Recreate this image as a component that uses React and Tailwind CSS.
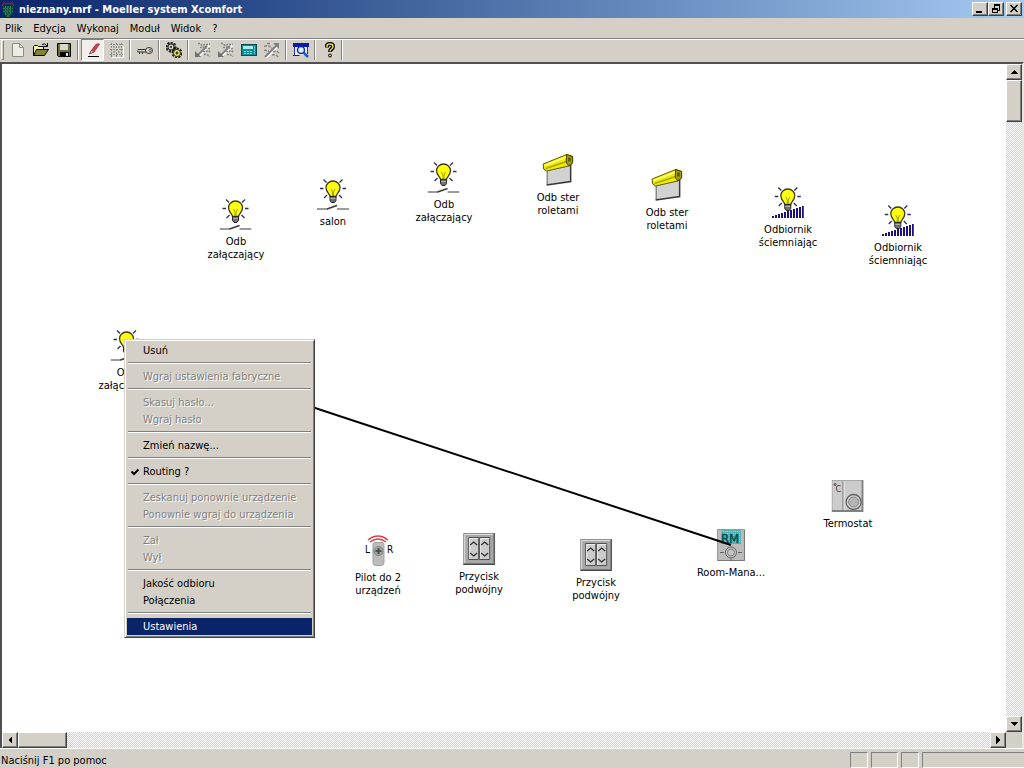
import { useState } from "react";

const raised =
  "bg-[#d4d0c8] border border-t-white border-l-white border-r-[#404040] border-b-[#404040] shadow-[inset_-1px_-1px_0_#808080]";
const track =
  "bg-[repeating-conic-gradient(#d4d0c8_0_25%,#ffffff_0_50%)] [background-size:2px_2px]";

const menus = ["Plik", "Edycja", "Wykonaj", "Moduł", "Widok", "?"];

const contextMenu = [
  [{ label: "Usuń" }],
  [{ label: "Wgraj ustawienia fabryczne", disabled: true }],
  [
    { label: "Skasuj hasło...", disabled: true },
    { label: "Wgraj hasło", disabled: true },
  ],
  [{ label: "Zmień nazwę..." }],
  [{ label: "Routing ?", checked: true }],
  [
    { label: "Zeskanuj ponownie urządzenie", disabled: true },
    { label: "Ponownie wgraj do urządzenia", disabled: true },
  ],
  [
    { label: "Zał", disabled: true },
    { label: "Wył", disabled: true },
  ],
  [{ label: "Jakość odbioru" }, { label: "Połączenia" }],
  [{ label: "Ustawienia" }],
];

// x is the centre of the module, y the top of its icon
const modules = [
  { id: 1, x: 234, y: 134, icon: SwitchIcon, lines: ["Odb", "załączający"] },
  { id: 2, x: 331, y: 114, icon: SwitchIcon, lines: ["salon"] },
  { id: 3, x: 442, y: 97, icon: SwitchIcon, lines: ["Odb", "załączający"] },
  { id: 4, x: 556, y: 90, icon: ShutterIcon, lines: ["Odb ster", "roletami"] },
  { id: 5, x: 665, y: 105, icon: ShutterIcon, lines: ["Odb ster", "roletami"] },
  { id: 6, x: 786, y: 122, icon: DimmerIcon, lines: ["Odbiornik", "ściemniając"] },
  { id: 7, x: 896, y: 140, icon: DimmerIcon, lines: ["Odbiornik", "ściemniając"] },
  { id: 8, x: 125, y: 265, icon: SwitchIcon, lines: ["Odb", "załączający"] },
  { id: 9, x: 376, y: 470, icon: RemoteIcon, lines: ["Pilot do 2", "urządzeń"] },
  { id: 10, x: 477, y: 469, icon: ButtonIcon, lines: ["Przycisk", "podwójny"] },
  { id: 11, x: 594, y: 475, icon: ButtonIcon, lines: ["Przycisk", "podwójny"] },
  { id: 12, x: 729, y: 465, icon: RoomManagerIcon, lines: ["Room-Mana..."] },
  { id: 13, x: 846, y: 416, icon: ThermostatIcon, lines: ["Termostat"] },
];

function Bulb() {
  return (
    <g>
      <path
        d="M6.500 1.500l3 3M25.500 1.500l-3 3M3 10.500h3.500M25.500 10.500H29M7 20l3-3M25 20l-3-3"
        stroke="#30305a"
        strokeWidth="1.300"
      />
      <path
        d="M13 18.500c0-2.500-4-4-4-9a7 6.500 0 0 1 14 0c0 5-4 6.500-4 9z"
        fill="#ffff10"
        stroke="#3c3c10"
        strokeWidth="1.300"
      />
      <path d="M14 11l1.500 3v4M18 11l-1.500 3v4" stroke="#a0a000" fill="none" />
      <path
        d="M13 18.500h6v4l-1.500 2h-3l-1.500-2z"
        fill="#707070"
        stroke="#282828"
      />
      <path d="M13.500 20.500h5" stroke="#b0b0b0" />
    </g>
  );
}

function SwitchIcon() {
  return (
    <svg width="32" height="32" viewBox="0 0 32 32" fill="none">
      <Bulb />
      <path d="M0 31h10.500M20 31h12" stroke="#383838" />
      <path d="M10 31l10-3.500" stroke="#383838" strokeWidth="1.500" />
    </svg>
  );
}

function DimmerIcon() {
  return (
    <svg width="32" height="32" viewBox="0 0 32 32" fill="none">
      <Bulb />
      {[0, 1, 2, 3, 4, 5, 6, 7, 8, 9, 10].map((i) => (
        <rect
          key={i}
          x={i * 3}
          y={30 - i}
          width="2"
          height={2 + i}
          fill="#1c1080"
          shapeRendering="crispEdges"
        />
      ))}
    </svg>
  );
}

function ShutterIcon() {
  return (
    <svg width="32" height="32" viewBox="0 0 32 32" fill="none">
      <path d="M5.500 15L28.500 9v18L5.500 31z" fill="#d2d2d2" />
      <path d="M5.500 15v16" stroke="#606060" />
      <path d="M5 31l24-3.500V9" stroke="#383838" strokeWidth="1.500" />
      <path d="M1.500 10L25 .500l6 2V9l-4 3L5 17l-3-2z" fill="#f0ec00" stroke="#5c5c00" />
      <path d="M3 11.500L25 3" stroke="#ffff80" strokeWidth="1.500" />
      <path d="M4 14.500L25 7.500" stroke="#a8a400" strokeWidth="1.500" />
      <path d="M25 .500l6 2V9l-4 3-2.500-4z" fill="#a4a000" stroke="#404000" />
      <path d="M26.500 3.500h2.500v4h-2.500z" fill="#585800" />
    </svg>
  );
}

function RemoteIcon() {
  return (
    <svg width="36" height="32" viewBox="0 0 36 32" fill="none">
      <path d="M8 6q10-8 20 0M10 8q8-6 16 0" stroke="#d84040" strokeWidth="1.500" />
      <path d="M13 10.500q0-2 2-2h7q2 0 2 2v18q0 3-3 3h-5q-3 0-3-3z" fill="#bcbcbc" stroke="#a0a0a0" />
      <circle cx="18.500" cy="17" r="4.500" fill="#a4a4a4" stroke="#808080" />
      <path d="M18.500 14v6M15.500 17h6" stroke="#505050" strokeWidth="2" />
      <text x="5" y="19" fontSize="10" fill="#000000">L</text>
      <text x="27" y="19" fontSize="10" fill="#000000">R</text>
    </svg>
  );
}

function ButtonIcon() {
  return (
    <svg width="32" height="32" viewBox="0 0 32 32" fill="none">
      <path d="M0 0h32v32H0z" fill="#a8a8a8" />
      <path d="M.5 31V.5H31" stroke="#909090" />
      <path d="M1.500 30V1.500H30" stroke="#dcdcdc" />
      <path d="M0 31.500h31.500V0" stroke="#484848" />
      <path d="M1 30.500h29.500V1" stroke="#787878" />
      <path d="M5.500 4.500h10v22h-10zM16.500 4.500h10v22h-10z" fill="#cccccc" stroke="#505050" />
      <path d="M6.500 26V5.500H15M17.500 26V5.500H26" stroke="#ececec" />
      <path
        d="M7 12l3.500-3 3.500 3M7 20l3.500 3 3.500-3M18 12l3.500-3 3.500 3M18 20l3.500 3 3.500-3"
        stroke="#303030"
        strokeWidth="1.300"
      />
    </svg>
  );
}

function RoomManagerIcon() {
  return (
    <svg width="32" height="32" viewBox="0 0 32 32" fill="none">
      <rect x="2.500" y=".5" width="27" height="31" fill="#bcbcbc" stroke="#989898" />
      <path d="M29.500 1v30.500H3" stroke="#787878" />
      <rect x="6" y="1" width="20" height="14" fill="#58b4b0" />
      <path d="M6 2.500h20M6 4.500h20M6 6.500h20M6 8.500h20M6 10.500h20M6 12.500h20" stroke="#98d0cc" strokeDasharray="1 1" />
      <text x="6" y="14" fontSize="13" fill="#004c58" stroke="#004c58" strokeWidth=".5">RM</text>
      <circle cx="16" cy="23.500" r="5.500" fill="#c4c4c4" stroke="#606060" />
      <circle cx="16" cy="23.500" r="3.500" stroke="#808080" />
      <path d="M5 23.500h4M23 23.500h4M16 30v2" stroke="#606060" />
    </svg>
  );
}

function ThermostatIcon() {
  return (
    <svg width="32" height="32" viewBox="0 0 32 32" fill="none">
      <path d="M0 0h32v32H0z" fill="#cccccc" />
      <path d="M.5 31V.5H31" stroke="#a8a8a8" />
      <path d="M0 31h32M31 0v32" stroke="#808080" strokeWidth="2" />
      <path d="M11.500 1v29" stroke="#686868" />
      <path d="M12.500 1v29" stroke="#eeeeee" />
      <text x="4" y="12" fontSize="9" fill="#404040">C</text>
      <circle cx="3.500" cy="4.500" r="1" stroke="#404040" />
      <circle cx="22" cy="22" r="7.500" fill="#d4d4d4" stroke="#606060" strokeWidth="1.300" />
      <circle cx="22" cy="22" r="5" fill="#b4b4b4" stroke="#848484" />
    </svg>
  );
}

function Svg16({ children }) {
  return (
    <svg width="16" height="16" viewBox="0 0 16 16" fill="none" aria-hidden="true">
      {children}
    </svg>
  );
}

function TransferGlyph() {
  return (
    <Svg16>
      <path d="M3 15L15 3" stroke="#ffffff" strokeWidth="2" />
      <path d="M2 14L12 4" stroke="#808080" strokeWidth="2" />
      <path d="M0 15V9l6 6z" fill="#707070" />
      <path
        d="M3 1.500h2l2 2 3-1h5M5 5.500h3l2-1 2 2h4M8 9.500h3l2-1 3 2M9 12.500h3l3 2"
        stroke="#848484"
        strokeDasharray="2 1"
        strokeWidth="1.500"
      />
    </Svg16>
  );
}

const tools = [
  [
    {
      label: "Nowy",
      icon: (
        <Svg16>
          <path d="M2.500 1.500h7l4 4v9h-11z" fill="#eeece6" stroke="#8c8c84" />
          <path d="M9.500 1.500v4h4" stroke="#8c8c84" />
        </Svg16>
      ),
    },
    {
      label: "Otwórz",
      icon: (
        <Svg16>
          <path d="M.5 13.500v-9l1-1h3l1 1h5v3" fill="#f4f4a0" stroke="#000000" />
          <path d="M.5 13.500l3-6h12l-4 6z" fill="#84842c" stroke="#000000" />
          <path d="M9 2.500q3-2 5 1.500M14.500 1v3.500H11" stroke="#000000" />
        </Svg16>
      ),
    },
    {
      label: "Zapisz",
      icon: (
        <Svg16>
          <path d="M1.500 1.500h13v13h-12l-1-1z" fill="#70702c" stroke="#000000" />
          <path d="M4 2h8v6H4z" fill="#d8d8d0" />
          <path d="M4 10h9v5H4z" fill="#000000" />
          <path d="M10 11h2v3h-2z" fill="#e4e4e4" />
        </Svg16>
      ),
    },
  ],
  [
    {
      label: "Edycja",
      pressed: true,
      icon: (
        <Svg16>
          <path d="M6 9l5.500-7h3L9 10z" fill="#cc4458" stroke="#a83040" />
          <path d="M6 9l-1.500 3L9 10" fill="#f4d8cc" stroke="#8c4040" />
          <path d="M3 14.500h11" stroke="#000000" />
        </Svg16>
      ),
    },
    {
      label: "Siatka",
      icon: (
        <Svg16>
          <path d="M2 2.500h13M2 7.500h13M2 12.500h13M3.500 1v14M8.500 1v14M13.500 1v14" stroke="#8c8c8c" strokeDasharray="2 1" />
          <path d="M5 4h2v2H5zM10 4h2v2h-2zM5 9h2v2H5zM10 9h2v2h-2z" fill="#a8a8a4" />
          <path d="M4 15.500h12M15.500 4v12" stroke="#ffffff" />
        </Svg16>
      ),
    },
  ],
  [
    {
      label: "Hasło",
      icon: (
        <Svg16>
          <path d="M9 7.500H1l-1 1 1 1.500h8M2.500 10v2M5.500 10v2" stroke="#303030" />
          <ellipse cx="12" cy="8.500" rx="3.500" ry="3" fill="#dcdcd0" stroke="#303030" />
          <circle cx="13" cy="8.500" r="1" fill="#ffffff" stroke="#505050" />
        </Svg16>
      ),
    },
  ],
  [
    {
      label: "Opcje",
      icon: (
        <Svg16>
          <circle cx="5" cy="5" r="4" stroke="#202020" strokeWidth="3" strokeDasharray="2 1" />
          <circle cx="5" cy="5" r="3" fill="#d0d0bc" stroke="#303030" />
          <circle cx="5" cy="5" r="1" fill="#202020" />
          <circle cx="11" cy="11" r="4" stroke="#202010" strokeWidth="3" strokeDasharray="2 1" />
          <circle cx="11" cy="11" r="3.500" fill="#e8e488" stroke="#404010" />
          <circle cx="11" cy="11" r="1.500" fill="#404010" />
        </Svg16>
      ),
    },
  ],
  [
    { label: "Wgraj", disabled: true, icon: <TransferGlyph /> },
    { label: "Odczytaj", disabled: true, icon: <TransferGlyph /> },
    {
      label: "Urządzenie",
      icon: (
        <Svg16>
          <rect x=".5" y="2.500" width="15" height="11" fill="#128c94" stroke="#084850" />
          <path d="M2 4h10v3H2z" fill="#a8ecec" />
          <path d="M3 9.500h8M3 11.500h8" stroke="#88dce0" strokeDasharray="2 1" />
          <path d="M13 4h1v8h-1z" fill="#50c0c4" />
        </Svg16>
      ),
    },
    {
      label: "Sygnał",
      disabled: true,
      icon: (
        <Svg16>
          <path d="M2 16L15 3" stroke="#ffffff" strokeWidth="2" />
          <path d="M1 15L14 2" stroke="#808080" strokeWidth="2" />
          <path d="M9 1h6v6z" fill="#808080" />
          <path d="M0 4.500q5-2 8 2M0 8.500q4-1 5 2M9 10q3-2 6 1M8 13q4-1 6 2M3 1.500h4" stroke="#858585" strokeWidth="1.500" strokeDasharray="3 1" />
        </Svg16>
      ),
    },
  ],
  [
    {
      label: "Podgląd",
      icon: (
        <Svg16>
          <path d="M0 1h16v4H0z" fill="#0818b0" />
          <path d="M1.500 5v8H7M14.500 5v7" stroke="#2030b0" />
          <path d="M2 5h12v8H2z" fill="#f2f2f2" />
          <circle cx="8" cy="8" r="3.500" fill="#d8f0ff" stroke="#1c2c94" strokeWidth="1.500" />
          <path d="M10.500 10.500L15 15" stroke="#2058c8" strokeWidth="2.500" />
          <path d="M0 13.500h6" stroke="#0818b0" />
        </Svg16>
      ),
    },
  ],
  [
    {
      label: "Pomoc",
      icon: (
        <Svg16>
          <path d="M5 5.500V4q0-2 3-2t3 2.500q0 1.500-1.500 2.500T8 10" stroke="#000000" strokeWidth="4" />
          <path d="M5 5V4q0-2 3-2t3 2.500q0 1.500-1.500 2.500T8 9.500" stroke="#e8e050" strokeWidth="1.500" />
          <circle cx="8" cy="13.500" r="1.500" fill="#e8e050" stroke="#000000" />
        </Svg16>
      ),
    },
  ],
];

function AppIcon() {
  return (
    <svg width="16" height="16" viewBox="0 0 16 16" fill="none" aria-hidden="true">
      <path d="M3 5h10v6l-3 5H6l-3-5z" fill="#0c5030" />
      <path d="M3 7.500h10M3 10.500h10M5 13.500h6M5.500 5v9M8 5v11M10.500 5v9" stroke="#2c7c5c" strokeDasharray="2 1" />
      <path d="M2.500 5q0-4 3-4M13.500 5q0-4-3-4M5 4q0-2 3-2t3 2" stroke="#84304c" />
    </svg>
  );
}

function WindowButton({ label, children }) {
  return (
    <button aria-label={label} className={`flex h-[14px] w-4 items-center justify-center ${raised}`}>
      <svg width="12" height="10" viewBox="0 0 12 10" fill="none" stroke="#000000" shapeRendering="crispEdges">
        {children}
      </svg>
    </button>
  );
}

function TitleBar() {
  return (
    <header className="flex h-[18px] shrink-0 items-center bg-linear-to-r from-[#0a246a] to-[#a6caf0] pr-[2px]">
      <AppIcon />
      <h1 className="ml-[3px] flex-1 truncate pt-px text-[11px] leading-4 font-bold text-white">
        nieznany.mrf - Moeller system Xcomfort
      </h1>
      <WindowButton label="Minimalizuj">
        <path d="M2 8h6" strokeWidth="2" />
      </WindowButton>
      <WindowButton label="Przywróć">
        <path d="M4 1h6M2 5h6" strokeWidth="2" />
        <path d="M4.500 1v3M9.500 1v5.500H8M2.500 5v3.500h5V5" />
      </WindowButton>
      <span className="w-[2px]" />
      <WindowButton label="Zamknij">
        <path d="M2.500 1l7 7M9.500 1l-7 7" strokeWidth="1.500" shapeRendering="auto" />
      </WindowButton>
    </header>
  );
}

function Toolbar() {
  return (
    <div className="flex h-6 shrink-0 items-center border-t border-[#808080] pb-px pl-px shadow-[inset_0_1px_0_#ffffff]">
      <span className="mr-[2px] h-5 w-[3px] border border-t-white border-r-[#808080] border-b-[#808080] border-l-white" />
      {tools.map((group, i) => (
        <div key={i} className="flex items-center">
          {group.map((tool) => (
            <button
              key={tool.label}
              aria-label={tool.label}
              disabled={tool.disabled}
              className={`flex h-[22px] w-[23px] items-center justify-center border ${
                tool.pressed
                  ? "border-t-[#808080] border-r-white border-b-white border-l-[#808080] bg-[#f2eeea]"
                  : "border-transparent"
              }`}
            >
              {tool.icon}
            </button>
          ))}
          <span className={`h-5 w-[2px] border-l border-[#808080] bg-white ${i < tools.length - 1 ? "mx-[2px]" : ""}`} />
        </div>
      ))}
    </div>
  );
}

function Module({ module }) {
  const Icon = module.icon;
  return (
    <button
      className="absolute flex -translate-x-1/2 flex-col items-center gap-[5px] text-[11px] leading-[13px] whitespace-nowrap"
      style={{ left: module.x, top: module.y }}
    >
      <Icon />
      <span>
        {module.lines.map((line) => (
          <span key={line} className="block">
            {line}
          </span>
        ))}
      </span>
    </button>
  );
}

function ContextMenu({ selected, onSelect }) {
  return (
    <div
      role="menu"
      className="absolute top-[275px] left-[122px] w-[191px] border border-t-[#d4d0c8] border-r-[#404040] border-b-[#404040] border-l-[#d4d0c8] bg-[#d4d0c8] p-[2px] shadow-[inset_1px_1px_0_#ffffff,inset_-1px_-1px_0_#808080]"
    >
      {contextMenu.map((group, i) => (
        <div key={i}>
          {i > 0 && (
            <div className="h-[9px] px-px pt-[3px]">
              <div className="h-[2px] border-t border-[#808080] bg-white" />
            </div>
          )}
          {group.map((item) => (
            <button
              key={item.label}
              role="menuitem"
              disabled={item.disabled}
              onMouseEnter={() => onSelect(item.label)}
              className={`relative block h-[17px] w-full pl-4 text-left text-[11px] leading-4 whitespace-nowrap ${
                item.disabled
                  ? "text-[#808080] [text-shadow:1px_1px_0_#ffffff]"
                  : selected === item.label
                    ? "bg-[#0a246a] text-white"
                    : "text-black"
              }`}
            >
              {item.checked && (
                <svg className="absolute top-[5px] left-1" width="8" height="8" viewBox="0 0 8 8" fill="none">
                  <path d="M.5 3.500L3 6l4.500-4.500" stroke="#000000" strokeWidth="2" />
                </svg>
              )}
              {item.label}
            </button>
          ))}
        </div>
      ))}
    </div>
  );
}

function ScrollButton({ label, d }) {
  return (
    <button aria-label={label} className={`flex size-4 shrink-0 items-center justify-center ${raised}`}>
      <svg width="8" height="8" viewBox="0 0 8 8" shapeRendering="crispEdges">
        <path d={d} fill="#000000" />
      </svg>
    </button>
  );
}

export default function App() {
  const [selected, setSelected] = useState("Ustawienia");

  return (
    <div className="flex h-screen flex-col overflow-hidden bg-[#d4d0c8] font-['DejaVu_Sans_Condensed','DejaVu_Sans',sans-serif] text-[11px] text-black">
      <TitleBar />
      <nav className="flex h-5 shrink-0 items-center gap-[11px] pt-px pl-[5px]">
        {menus.map((menu) => (
          <button key={menu} className="leading-4">
            {menu}
          </button>
        ))}
      </nav>
      <Toolbar />

      <main className="grid min-h-0 flex-1 grid-cols-[1fr_16px] grid-rows-[1fr_16px] border-x-2 border-t-2 border-t-[#505050] border-r-[#e8e6e0] border-l-[#505050]">
        <div className="relative min-w-0 overflow-hidden bg-white">
          {modules.map((module) => (
            <Module key={module.id} module={module} />
          ))}
          <svg className="pointer-events-none absolute inset-0 size-full">
            <line x1="125" y1="282" x2="729" y2="481" stroke="#000000" strokeWidth="2" />
          </svg>
          <ContextMenu selected={selected} onSelect={setSelected} />
        </div>
        <div className={`flex flex-col ${track}`}>
          <ScrollButton label="Przewiń w górę" d="M4 2l4 4H0z" />
          <div className={`h-[42px] ${raised}`} />
          <div className="flex-1" />
          <ScrollButton label="Przewiń w dół" d="M0 2h8L4 6z" />
        </div>
        <div className={`flex ${track}`}>
          <ScrollButton label="Przewiń w lewo" d="M6 0v8L2 4z" />
          <div className={`w-[49px] ${raised}`} />
          <div className="flex-1" />
          <ScrollButton label="Przewiń w prawo" d="M2 0l4 4-4 4z" />
        </div>
        <div className="bg-[#d4d0c8]" />
      </main>

      <footer className="flex h-5 shrink-0 gap-[3px] border-t border-white pt-[3px]">
        <p className="flex-1 pl-px leading-[17px]">Naciśnij F1 po pomoc</p>
        <span className="w-[18px] border border-t-[#808080] border-r-white border-b-white border-l-[#808080]" />
        <span className="w-[27px] border border-t-[#808080] border-r-white border-b-white border-l-[#808080]" />
        <span className="w-[18px] border border-t-[#808080] border-r-white border-b-white border-l-[#808080]" />
        <span className="w-[102px] border border-r-0 border-t-[#808080] border-b-white border-l-[#808080]" />
      </footer>
    </div>
  );
}
